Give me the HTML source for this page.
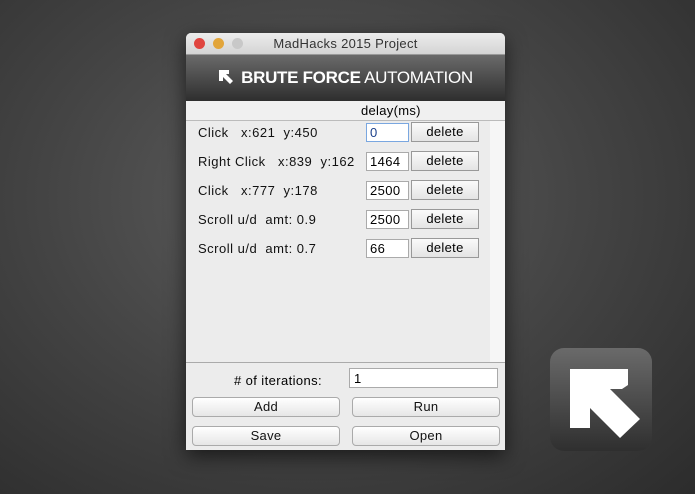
<!DOCTYPE html>
<html><head><style>
body{margin:0;width:695px;height:494px;overflow:hidden;background:radial-gradient(ellipse at 45% 40%,#5e5e5e 0%,#444 50%,#2c2c2c 100%);font-family:"Liberation Sans",sans-serif;position:relative}
.win{position:absolute;left:186px;top:33px;width:319px;height:417px;background:#ececec;border-radius:5px 5px 0 0;overflow:hidden;box-shadow:0 6px 20px rgba(0,0,0,.6)}
.title{height:21px;background:linear-gradient(#ececec,#d4d4d4);border-bottom:1px solid #999;text-align:center;font-size:13px;line-height:21px;color:#333;letter-spacing:.3px}
.dot{position:absolute;top:5px;width:11px;height:11px;border-radius:50%}
.banner{height:46px;background:linear-gradient(#6a6a6a,#2e2e2e);color:#fff;font-size:17px;line-height:46px;text-align:center;letter-spacing:-.3px}
.hdr{height:19px;border-bottom:1px solid #bbb;background:#f0f0f0;font-size:13px;line-height:19px;position:relative}
.list{position:absolute;top:88px;left:0;width:304px;height:241px;background:#ececec;border-right:1px solid #ddd}
.sb{position:absolute;top:88px;left:304px;width:15px;height:241px;background:#f6f6f6}
.row{position:absolute;left:12px;font-size:13px;color:#111;letter-spacing:.5px}
.inp{position:absolute;left:180px;width:38px;height:17px;background:#fff;border:1px solid #aaa;font-size:13px;line-height:17px;padding-left:3px;box-sizing:content-box;letter-spacing:.4px}
.del{position:absolute;left:225px;width:66px;height:18px;background:linear-gradient(#fafafa,#e4e4e4);border:1px solid #999;font-size:13px;line-height:18px;text-align:center;letter-spacing:.3px}
.bot{position:absolute;top:329px;left:0;width:319px;height:88px;border-top:1px solid #aaa;background:#ececec}
.btn{position:absolute;width:146px;height:18px;border:1px solid #aaa;border-radius:4px;background:linear-gradient(#fff,#e6e6e6);font-size:13px;line-height:18px;text-align:center;color:#111;letter-spacing:.3px}
</style></head><body>
<div class="win">
<div class="title"><span class="dot" style="left:8px;background:#e0453f"></span><span class="dot" style="left:27px;background:#e2a53a"></span><span class="dot" style="left:46px;background:#c8c8c8"></span>MadHacks 2015 Project</div>
<div class="banner"><svg width="16" height="16" viewBox="0 0 16 16" style="vertical-align:-2px;margin-right:7px"><polygon points="1,1 11,1 11,5 8,5 15,12 12,15 5,8 5,12 1,12" fill="#fff"/></svg><b>BRUTE FORCE</b> AUTOMATION</div>
<div class="hdr"><span style="position:absolute;left:175px;letter-spacing:.3px">delay(ms)</span></div>
<div class="list">
<div class="row" style="top:4px">Click&nbsp;&nbsp; x:621&nbsp; y:450</div><div class="inp" style="top:2px;border-color:#7aa7e0;color:#1a3f8a">0</div><div class="del" style="top:1px">delete</div>
<div class="row" style="top:33px">Right Click&nbsp;&nbsp; x:839&nbsp; y:162</div><div class="inp" style="top:31px">1464</div><div class="del" style="top:30px">delete</div>
<div class="row" style="top:62px">Click&nbsp;&nbsp; x:777&nbsp; y:178</div><div class="inp" style="top:60px">2500</div><div class="del" style="top:59px">delete</div>
<div class="row" style="top:91px">Scroll u/d&nbsp; amt: 0.9</div><div class="inp" style="top:89px">2500</div><div class="del" style="top:88px">delete</div>
<div class="row" style="top:120px">Scroll u/d&nbsp; amt: 0.7</div><div class="inp" style="top:118px">66</div><div class="del" style="top:117px">delete</div>
</div>
<div class="sb"></div>
<div class="bot">
<div style="position:absolute;left:48px;top:10px;font-size:13px;letter-spacing:.4px">#&nbsp;of iterations:</div>
<div style="position:absolute;left:163px;top:5px;width:149px;height:20px;background:#fff;border:1px solid #aaa;font-size:13px;line-height:20px;padding-left:4px;box-sizing:border-box">1</div>
<div class="btn" style="left:6px;top:34px">Add</div><div class="btn" style="left:166px;top:34px">Run</div>
<div class="btn" style="left:6px;top:63px">Save</div><div class="btn" style="left:166px;top:63px">Open</div>
</div>
</div>
<div style="position:absolute;left:550px;top:348px;width:102px;height:103px;border-radius:14px;background:linear-gradient(#6a6a6a,#2f2f2f)"></div>
<svg style="position:absolute;left:0;top:0" width="695" height="494"><polygon points="570,369 628,369 628,385 622,389 610,389 640,419 620,438 590,408 590,428 570,428" fill="#fff"/></svg>
</body></html>
